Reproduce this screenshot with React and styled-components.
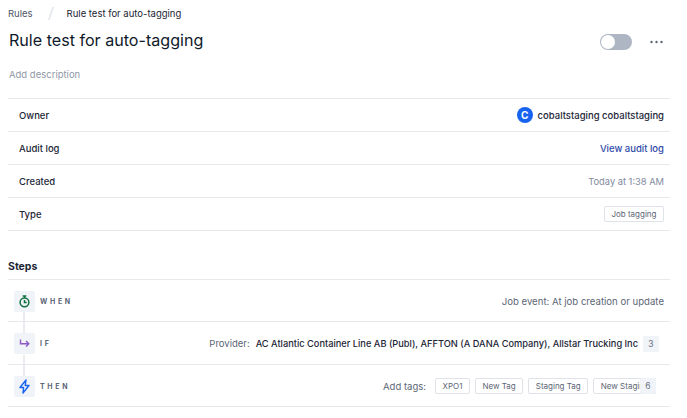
import React from "react";
import styled, { createGlobalStyle } from "styled-components";

const Global = createGlobalStyle`
  html, body { margin: 0; padding: 0; background: #fff; width: 687px; height: 418px; overflow: hidden; }
  body { font-family: Inter, Roboto, "Liberation Sans", sans-serif; color: #0f1a2a; }
`;
const Page = styled.div`
  width: 687px; height: 418px; overflow: hidden; padding: 0 17px 0 8px; box-sizing: border-box;
  display: flex; flex-direction: column;
`;
const Breadcrumbs = styled.nav`
  height: 26px; display: flex; align-items: center; font-size: 9.5px;
`;
const Crumb = styled.span`color: ${p => p.$current ? "#1a2433" : "#4c5665"}; font-weight: 400;`;
const Slash = styled.span`
  width: 2px; height: 13px; background: #e6e9ee; transform: skewX(-18deg); margin: 0 15px 0 17px;
`;
const Header = styled.header`
  display: flex; align-items: center; justify-content: space-between; height: 30px; padding: 0 7px 0 1px;
`;
const Title = styled.h1`margin: 0 0 2px; font-size: 16.1px; font-weight: 400; color: #0f1a2a;`;
const Actions = styled.div`display: flex; align-items: center; gap: 18px; position: relative; top: 1px;`;
const Toggle = styled.div`
  width: 32px; height: 16px; border-radius: 8px; background: #aeb6c3; padding: 1px; box-sizing: border-box;
`;
const Knob = styled.div`width: 14px; height: 14px; border-radius: 50%; background: #fff;`;
const Description = styled.div`
  font-size: 9.5px; color: #8f98a6; padding: 0 1px; margin-top: 13px; height: 12px; line-height: 12px; margin-bottom: 17px;
`;
const InfoRow = styled.div`
  height: 33px; box-sizing: border-box; border-top: 1px solid #e6e8ec;
  display: flex; align-items: center; justify-content: space-between; padding: 0 6px 0 11px; font-size: 9.5px;
  &:last-of-type { border-bottom: 1px solid #e6e8ec; height: 34px; }
`;
const Label = styled.span`color: #1c2636; font-weight: 500;`;
const Owner = styled.span`display: flex; align-items: center; gap: 5px; font-weight: 500; color: #1c2636;`;
const Avatar = styled.span`
  width: 16px; height: 16px; border-radius: 50%; background: #1763f0; color: #fff;
  display: flex; align-items: center; justify-content: center; font-size: 10px; font-weight: 700;
`;
const LinkText = styled.a`color: #2f4aa8; font-weight: 500;`;
const Muted = styled.span`color: #7f8ba0; font-size: 9.3px;`;
const Tag = styled.span`
  height: 16px; box-sizing: border-box; border: 1px solid #dfe2e7; border-radius: 2px; padding: 0 6.5px;
  display: inline-flex; align-items: center; font-size: 8px; color: #5c6675; background: #fff; white-space: nowrap; flex: none;
`;
const StepsTitle = styled.h2`
  margin: 29px 0 0; font-size: 10.5px; font-weight: 700; color: #1c2636; height: 13px; line-height: 13px;
`;
const Steps = styled.div`margin-top: 6px;`;
const StepRow = styled.div`
  position: relative; height: ${p => p.$h}px; box-sizing: border-box; border-top: 1px solid #e6e8ec;
  display: flex; align-items: center; justify-content: space-between;
  padding: 1px ${p => p.$pr || 6}px 0 6px;
  &:last-child { border-bottom: 1px solid #e6e8ec; }
`;
const Connector = styled.span`
  position: absolute; left: 15px; width: 2px; background: #e8ebef; top: ${p => p.$top}px; bottom: ${p => p.$bottom}px;
`;
const StepLead = styled.div`display: flex; align-items: center; gap: 5px;`;
const IconBox = styled.div`
  position: relative; width: 21px; height: 21px; border-radius: 2px; background: #f0f3f7;
  display: flex; align-items: center; justify-content: center;
`;
const StepName = styled.span`font-size: 7px; font-weight: 700; letter-spacing: 2.7px; color: #5a6577;`;
const StepText = styled.span`font-size: 9.6px; color: #5c6675;`;
const Detail = styled.div`display: flex; align-items: center; font-size: 9.5px; white-space: nowrap;`;
const FieldLabel = styled.span`color: #5c6675; margin-right: ${p => p.$gap}px;`;
const Strong = styled.span`color: #1c2636; font-weight: 500; font-size: 9.25px;`;
const Count = styled.span`
  width: 16px; height: 16px; border-radius: 2px; background: #f0f3f7; color: #6b7585;
  display: flex; align-items: center; justify-content: center; font-size: 8.5px; margin-left: ${p => p.$ml}px; flex: none; position: relative;
`;
const Tags = styled.div`display: flex; gap: 5px; width: 221px; overflow: hidden;`;
const TagClip = styled.div`display: flex; align-items: center;`;

export default function App() {
  return (
    <Page>
      <Global />
      <Breadcrumbs>
        <Crumb>Rules</Crumb><Slash /><Crumb $current>Rule test for auto-tagging</Crumb>
      </Breadcrumbs>
      <Header>
        <Title>Rule test for auto-tagging</Title>
        <Actions>
          <Toggle><Knob /></Toggle>
          <svg width="13" height="4" viewBox="0 0 13 4"><g fill="#5c6675"><circle cx="1.5" cy="2" r="1.2"/><circle cx="6.5" cy="2" r="1.2"/><circle cx="11.5" cy="2" r="1.2"/></g></svg>
        </Actions>
      </Header>
      <Description>Add description</Description>
      <div>
        <InfoRow><Label>Owner</Label><Owner><Avatar>C</Avatar>cobaltstaging cobaltstaging</Owner></InfoRow>
        <InfoRow><Label>Audit log</Label><LinkText>View audit log</LinkText></InfoRow>
        <InfoRow><Label>Created</Label><Muted>Today at 1:38 AM</Muted></InfoRow>
        <InfoRow><Label>Type</Label><Tag>Job tagging</Tag></InfoRow>
      </div>
      <StepsTitle>Steps</StepsTitle>
      <Steps>
        <StepRow $h={42}>
          <Connector $top={32} $bottom={-12} />
          <StepLead>
            <IconBox>
              <svg width="11" height="13" viewBox="0 0 11 13" fill="none" stroke="#12703f" strokeWidth="1.5"><circle cx="5.5" cy="7.3" r="4.4"/><path d="M3.7 1h3.6M5.5 1v2M5.5 5v2.5h2.2"/></svg>
            </IconBox>
            <StepName>WHEN</StepName>
          </StepLead>
          <StepText>Job event: At job creation or update</StepText>
        </StepRow>
        <StepRow $h={43} $pr={11}>
          <Connector $top={33} $bottom={-12} />
          <StepLead>
            <IconBox>
              <svg width="11" height="9" viewBox="0 0 11 9" fill="none" stroke="#8a5cc4" strokeWidth="1.4"><path d="M1.5 0.5v4.3h8M7 2l2.8 2.8L7 7.6"/></svg>
            </IconBox>
            <StepName>IF</StepName>
          </StepLead>
          <Detail>
            <FieldLabel $gap={6}>Provider:</FieldLabel>
            <Strong>AC Atlantic Container Line AB (Publ), AFFTON (A DANA Company), Allstar Trucking Inc</Strong>
            <Count $ml={5}>3</Count>
          </Detail>
        </StepRow>
        <StepRow $h={43} $pr={14}>
          <StepLead>
            <IconBox>
              <svg width="11" height="15" viewBox="0 0 11 15" fill="none" stroke="#1763f0" strokeWidth="1.4" strokeLinejoin="round"><path d="M7 1 1 8.5h3.6L4 14l6-7.5H6.2z"/></svg>
            </IconBox>
            <StepName>THEN</StepName>
          </StepLead>
          <Detail>
            <FieldLabel $gap={9}>Add tags:</FieldLabel>
            <TagClip>
              <Tags>
                <Tag>XPO1</Tag><Tag>New Tag</Tag><Tag>Staging Tag</Tag><Tag>New Staging Tag</Tag>
              </Tags>
              <Count $ml={-16}>6</Count>
            </TagClip>
          </Detail>
        </StepRow>
      </Steps>
    </Page>
  );
}
